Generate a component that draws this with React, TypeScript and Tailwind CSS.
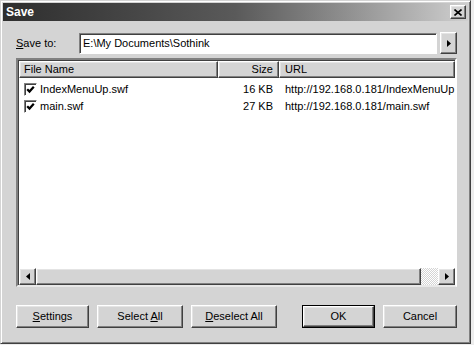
import React from 'react';

const font = { fontFamily: '"Liberation Sans", Arial, sans-serif' };

const raised =
    'border border-t-white border-l-white border-r-[#404040] border-b-[#404040] shadow-[inset_-1px_-1px_#808080,inset_1px_1px_#e4e4e4] bg-[#d4d4d4]';

const Arrow = ({ dir }: { dir: 'left' | 'right' }) => (
    <svg width="4" height="7" viewBox="0 0 4 7">
        {dir === 'right' ? <path d="M0 0L4 3.5L0 7Z" fill="#000" /> : <path d="M4 0L0 3.5L4 7Z" fill="#000" />}
    </svg>
);

const Check = () => (
    <div className="w-[13px] h-[13px] bg-white border border-t-[#808080] border-l-[#808080] border-r-white border-b-white shadow-[inset_1px_1px_#404040] flex items-center justify-center">
        <svg width="9" height="9" viewBox="0 0 9 9">
            <path d="M1.2 4.2L3.5 6.6L7.8 1.8" stroke="#000" strokeWidth="2.2" fill="none" />
        </svg>
    </div>
);

const files = [
    { name: 'IndexMenuUp.swf', size: '16 KB', url: 'http://192.168.0.181/IndexMenuUp.swf' },
    { name: 'main.swf', size: '27 KB', url: 'http://192.168.0.181/main.swf' },
];

const Btn = ({ children, w, isDefault }: { children: React.ReactNode; w: string; isDefault?: boolean }) =>
    isDefault ? (
        <div className={`${w} h-[23px] border border-black`}>
            <div className={`${raised} w-full h-full flex items-center justify-center`}>{children}</div>
        </div>
    ) : (
        <div className={`${raised} ${w} h-[23px] flex items-center justify-center`}>{children}</div>
    );

export default function App() {
    return (
        <div className="w-[474px] h-[345px] bg-[#ededed] text-[11px] text-black" style={font}>
            <div className="w-[471px] h-[344px] bg-[#d4d4d4] border border-t-[#d4d4d4] border-l-[#d4d4d4] border-r-[#404040] border-b-[#404040] shadow-[inset_1px_1px_white,inset_-1px_-1px_#808080] p-[2px] flex flex-col">
                {/* title bar */}
                <div className="h-[18px] bg-gradient-to-r from-[#2e2e2e] via-[#5a5a5a] to-[#cfcfcf] flex items-center justify-between pl-[3px] pr-[2px]">
                    <span className="text-white font-bold text-[12px]">Save</span>
                    <div className={`${raised} w-[16px] h-[14px] flex items-center justify-center`}>
                        <svg width="8" height="7" viewBox="0 0 8 7">
                            <path d="M0.5 0.5L7.5 6.5M7.5 0.5L0.5 6.5" stroke="#000" strokeWidth="1.6" />
                        </svg>
                    </div>
                </div>

                <div className="flex flex-col pl-[13px] pr-[11px] pt-[11px]">
                    {/* save to row */}
                    <div className="flex items-center h-[22px]">
                        <span className="w-[63px]">
                            <span className="underline">S</span>ave to:
                        </span>
                        <div className="w-[358px] h-[21px] bg-white border border-t-[#808080] border-l-[#808080] border-r-white border-b-white shadow-[inset_1px_1px_#404040] flex items-center pl-[3px]">
                            E:\My Documents\Sothink
                        </div>
                        <div className={`${raised} ml-[3px] w-[17px] h-[22px] flex items-center justify-center`}>
                            <Arrow dir="right" />
                        </div>
                    </div>

                    {/* list */}
                    <div className="mt-[4px] w-[441px] h-[229px] bg-white border-2 border-t-[#808080] border-l-[#808080] border-r-white border-b-[#e8e8e8] shadow-[inset_1px_1px_#404040] flex flex-col pt-[1px] pl-[1px]">
                        <div className="flex h-[17px] shrink-0">
                            <div className={`${raised} w-[199px] flex items-center pl-[4px]`}>File Name</div>
                            <div className={`${raised} w-[61px] flex items-center justify-end pr-[5px]`}>Size</div>
                            <div className={`${raised} flex-1 flex items-center pl-[5px]`}>URL</div>
                        </div>
                        <div className="flex-1 flex flex-col pt-[3px] overflow-hidden">
                            {files.map((f) => (
                                <div key={f.name} className="flex h-[17px] items-center whitespace-nowrap">
                                    <div className="w-[199px] flex items-center pl-[5px] gap-[3px]">
                                        <Check />
                                        <span>{f.name}</span>
                                    </div>
                                    <div className="w-[61px] text-right pr-[6px]">{f.size}</div>
                                    <div className="flex-1 overflow-hidden pl-[6px]">{f.url}</div>
                                </div>
                            ))}
                        </div>
                        {/* horizontal scrollbar */}
                        <div className="flex h-[17px] shrink-0">
                            <div className={`${raised} w-[17px] flex items-center justify-center`}>
                                <Arrow dir="left" />
                            </div>
                            <div className={`${raised} w-[385px]`} />
                            <div className="w-[17px] bg-[repeating-conic-gradient(#ffffff_0%_25%,#d4d4d4_0%_50%)] bg-[length:2px_2px]" />
                            <div className={`${raised} w-[17px] flex items-center justify-center`}>
                                <Arrow dir="right" />
                            </div>
                        </div>
                    </div>

                    {/* buttons */}
                    <div className="flex mt-[18px]">
                        <Btn w="w-[73px]">
                            <span><span className="underline">S</span>ettings</span>
                        </Btn>
                        <div className="ml-[8px]">
                            <Btn w="w-[86px]">
                                <span>Select <span className="underline">A</span>ll</span>
                            </Btn>
                        </div>
                        <div className="ml-[8px]">
                            <Btn w="w-[86px]">
                                <span><span className="underline">D</span>eselect All</span>
                            </Btn>
                        </div>
                        <div className="ml-[25px]">
                            <Btn w="w-[73px]" isDefault>
                                OK
                            </Btn>
                        </div>
                        <div className="ml-[8px]">
                            <Btn w="w-[74px]">Cancel</Btn>
                        </div>
                    </div>
                </div>
            </div>
        </div>
    );
}
